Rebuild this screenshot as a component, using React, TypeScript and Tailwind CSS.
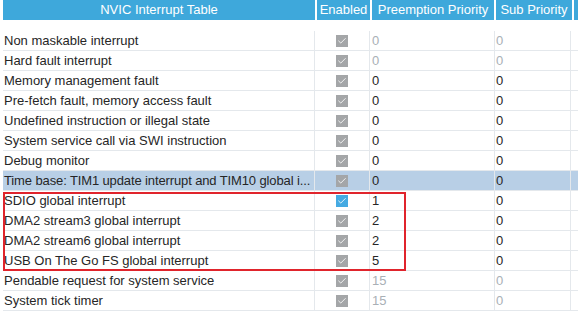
import { Check } from 'lucide-react'

type Row = { name: string; pre: string; sub: string; dim?: boolean; on?: boolean; sel?: boolean }

const rows: Row[] = [
  { name: 'Non maskable interrupt', pre: '0', sub: '0', dim: true },
  { name: 'Hard fault interrupt', pre: '0', sub: '0', dim: true },
  { name: 'Memory management fault', pre: '0', sub: '0' },
  { name: 'Pre-fetch fault, memory access fault', pre: '0', sub: '0' },
  { name: 'Undefined instruction or illegal state', pre: '0', sub: '0' },
  { name: 'System service call via SWI instruction', pre: '0', sub: '0' },
  { name: 'Debug monitor', pre: '0', sub: '0' },
  { name: 'Time base: TIM1 update interrupt and TIM10 global i...', pre: '0', sub: '0', sel: true },
  { name: 'SDIO global interrupt', pre: '1', sub: '0', on: true },
  { name: 'DMA2 stream3 global interrupt', pre: '2', sub: '0' },
  { name: 'DMA2 stream6 global interrupt', pre: '2', sub: '0' },
  { name: 'USB On The Go FS global interrupt', pre: '5', sub: '0' },
  { name: 'Pendable request for system service', pre: '15', sub: '0', dim: true },
  { name: 'System tick timer', pre: '15', sub: '0', dim: true },
]

function Box({ on }: { on?: boolean }) {
  return (
    <span
      className={`flex h-[12px] w-[12px] items-center justify-center ${on ? 'bg-[#45aae2]' : 'bg-[#a4a6a8]'}`}
    >
      <Check size={10} strokeWidth={2} className="text-white" />
    </span>
  )
}

export default function App() {
  return (
    <div
      className="relative h-[321px] w-[578px] overflow-hidden bg-white text-[13px] text-[#262626]"
      style={{ fontFamily: '"Liberation Sans", Arial, sans-serif' }}
    >
      {/* header */}
      <div className="flex h-[20px] pl-[3px] text-[13px] text-white">
        <div className="flex w-[312px] items-center justify-center bg-[#3ea8db]">NVIC Interrupt Table</div>
        <div className="ml-[2px] flex w-[53px] items-center justify-center bg-[#3ea8db]">Enabled</div>
        <div className="ml-[2px] flex w-[122px] items-center justify-center bg-[#3ea8db]">Preemption Priority</div>
        <div className="ml-[2px] flex w-[76px] items-center justify-center bg-[#3ea8db]">Sub Priority</div>
        <div className="ml-[2px] flex-1 bg-[#3ea8db]" />
      </div>

      <div className="mt-[11px] pl-[3px]">
        {rows.map((r) => (
          <div
            key={r.name}
            className={`flex h-[20px] border-b border-[#e4e8ec] ${r.sel ? 'bg-[#b8cfe6]' : ''}`}
          >
            <div
              className={`flex w-[312px] items-center border-r border-[#e4e8ec] pl-[1px] whitespace-nowrap ${r.sel ? 'tracking-[-0.12px]' : ''}`}
            >
              {r.name}
            </div>
            <div className="flex w-[55px] items-center justify-center border-r border-[#e4e8ec] pr-[1px]">
              <Box on={r.on} />
            </div>
            <div
              className={`flex w-[125px] items-center border-r border-[#e4e8ec] pl-[2px] ${r.dim ? 'text-[#a9b0b6]' : ''}`}
            >
              {r.pre}
            </div>
            <div
              className={`flex w-[76px] items-center border-r border-[#e4e8ec] pl-[1px] ${r.dim ? 'text-[#a9b0b6]' : ''}`}
            >
              {r.sub}
            </div>
            <div className="flex-1" />
          </div>
        ))}
      </div>

      {/* highlight box */}
      <div className="absolute left-[3px] top-[192px] h-[79px] w-[403px] border-2 border-[#e0242c]" />
    </div>
  )
}
